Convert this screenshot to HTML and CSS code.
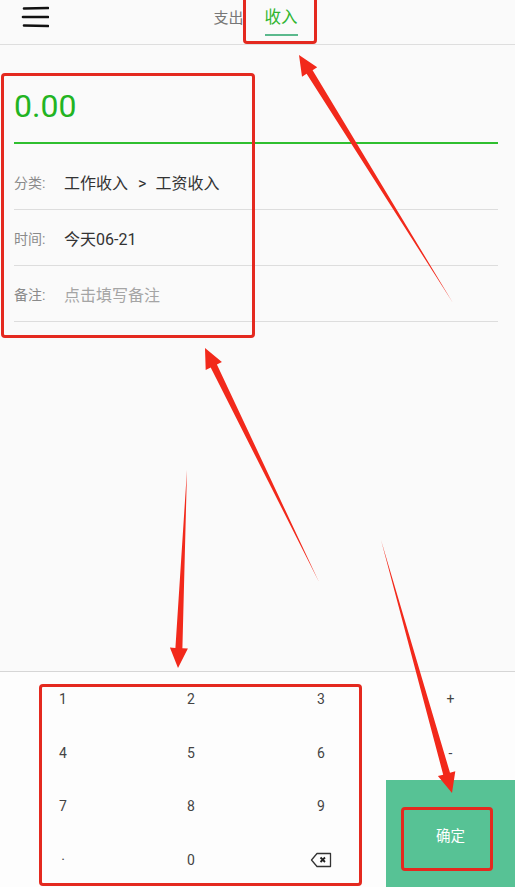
FILE: index.html
```html
<!DOCTYPE html>
<html lang="zh-CN">
<head>
    <meta charset="UTF-8">
    <meta name="viewport" content="width=device-width, initial-scale=1.0">
    <title>记一笔</title>
    <link rel="stylesheet" href="styles.css">
</head>
<body>

<div class="page">
    <!-- Top bar -->
    <div class="topbar">
        <div class="menu-btn">
            <svg width="28" height="24" viewBox="0 0 28 24">
                <path d="M3 4.5 L27 4" stroke="#111" stroke-width="2.6" stroke-linecap="round"/>
                <path d="M2 13 L27 13" stroke="#111" stroke-width="2.6" stroke-linecap="round"/>
                <path d="M3 21.5 L27 22" stroke="#111" stroke-width="2.6" stroke-linecap="round"/>
            </svg>
        </div>
        <div class="tabs">
            <div class="tab">支出</div>
            <div class="tab active">收入</div>
        </div>
    </div>

    <!-- Form -->
    <div class="form">
        <div class="amount">0.00</div>
        <div class="row first">
            <span class="label">分类:</span>
            <span class="value">工作收入<span class="sep">&gt;</span>工资收入</span>
        </div>
        <div class="row">
            <span class="label">时间:</span>
            <span class="value">今天06-21</span>
        </div>
        <div class="row">
            <span class="label">备注:</span>
            <span class="value placeholder">点击填写备注</span>
        </div>
    </div>

    <!-- Keypad -->
    <div class="keypad">
        <div class="key">1</div>
        <div class="key">2</div>
        <div class="key">3</div>
        <div class="key">+</div>
        <div class="key">4</div>
        <div class="key">5</div>
        <div class="key">6</div>
        <div class="key">-</div>
        <div class="key">7</div>
        <div class="key">8</div>
        <div class="key">9</div>
        <div class="key confirm">确定</div>
        <div class="key">·</div>
        <div class="key">0</div>
        <div class="key">
            <svg width="22" height="16" viewBox="0 0 22 16">
                <path d="M7 1.5 H20.5 V14.5 H7 L1.5 8 Z" fill="none" stroke="#333" stroke-width="1.3" stroke-linejoin="round"/>
                <path d="M10.5 5.5 L15 10 M15 5.5 L10.5 10" stroke="#222" stroke-width="1.8"/>
            </svg>
        </div>
    </div>

    <!-- Annotation marks -->
    <div class="mark mark-tab"></div>
    <div class="mark mark-form"></div>
    <div class="mark mark-keys"></div>
    <div class="mark mark-ok"></div>
    <svg class="arrows" width="515" height="887" viewBox="0 0 515 887">
        <polygon points="453,303 312.6,70.2 317.2,67.3 299,55 302.0,76.7 306.6,73.8"/>
        <polygon points="319,582 216.9,364.5 221.9,362.1 205,348 205.7,369.9 210.7,367.5"/>
        <polygon points="187,470 175.4,647.9 169.9,647.6 178,668 187.9,648.4 182.4,648.2"/>
        <polygon points="381,540 443.2,774.7 437.9,776.1 452,793 455.3,771.3 450.0,772.8"/>
    </svg>
</div>

</body>
</html>
```

FILE: styles.css
```css
body {
    margin: 0;
    padding: 0;
    font-family: Roboto, "Noto Sans CJK SC", sans-serif;
    background-color: #fafafa;
}
.page {
    position: relative;
    width: 515px;
    height: 887px;
    display: flex;
    flex-direction: column;
    overflow: hidden;
    background-color: #fafafa;
}
.topbar {
    position: relative;
    height: 44px;
    border-bottom: 1px solid #dedede;
    display: flex;
    align-items: center;
    justify-content: center;
}
.menu-btn {
    position: absolute;
    left: 21px;
    top: 4px;
}
.tabs {
    display: flex;
    gap: 21px;
    margin-left: -4px;
    height: 100%;
}
.tab {
    font-size: 15px;
    color: #777;
    padding-top: 6px;
    box-sizing: border-box;
    height: 100%;
}
.tab.active {
    font-size: 16.5px;
    color: #2fb52f;
    padding-top: 4px;
    position: relative;
}
.tab.active::after {
    content: "";
    position: absolute;
    left: 0;
    right: 0;
    top: 34px;
    height: 2px;
    background-color: #5bb98d;
}
.form {
    flex: 1;
    padding: 0 17px 0 14px;
}
.amount {
    height: 99px;
    box-sizing: border-box;
    padding-top: 43px;
    font-size: 32px;
    line-height: 36px;
    color: #22b422;
    border-bottom: 2px solid #2fbf2f;
}
.row {
    height: 55px;
    display: flex;
    align-items: center;
    border-bottom: 1px solid #dddddd;
}
.row.first {
    height: 66px;
    padding-top: 11px;
    box-sizing: border-box;
}
.label {
    width: 50px;
    font-size: 14px;
    color: #8a8a8a;
}
.value {
    font-size: 16px;
    color: #333;
}
.value .sep {
    margin: 0 9px 0 10px;
}
.value.placeholder {
    color: #a5a5a5;
}
.keypad {
    height: 215px;
    border-top: 1px solid #d6d6d6;
    background-color: #fdfdfd;
    display: grid;
    grid-template-columns: 126px 130px 130px 129px;
    grid-template-rows: repeat(4, 1fr);
}
.key {
    display: flex;
    align-items: center;
    justify-content: center;
    font-size: 14px;
    color: #444;
}
.key.confirm {
    grid-column: 4;
    grid-row: 3 / span 2;
    background-color: #57c295;
    color: #fff;
    font-size: 14.5px;
    padding-top: 2px;
}
.mark {
    position: absolute;
    border: 3px solid #e4291f;
    border-radius: 4px;
    box-sizing: border-box;
}
.mark-tab {
    left: 243px;
    top: -4px;
    width: 74px;
    height: 48px;
}
.mark-form {
    left: 1px;
    top: 73px;
    width: 254px;
    height: 265px;
}
.mark-keys {
    left: 39px;
    top: 684px;
    width: 323px;
    height: 202px;
}
.mark-ok {
    left: 401px;
    top: 807px;
    width: 92px;
    height: 64px;
}
.arrows {
    position: absolute;
    left: 0;
    top: 0;
    pointer-events: none;
}
.arrows polygon {
    fill: #f2291b;
}
```
